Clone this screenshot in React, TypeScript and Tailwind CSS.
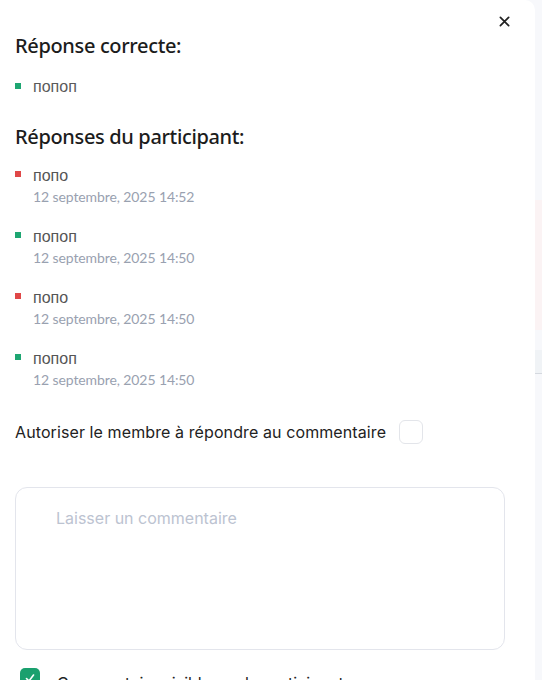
import React from "react";

const items = [
  { t: "попо", d: "12 septembre, 2025 14:52", ok: false },
  { t: "попоп", d: "12 septembre, 2025 14:50", ok: true },
  { t: "попо", d: "12 septembre, 2025 14:50", ok: false },
  { t: "попоп", d: "12 septembre, 2025 14:50", ok: true },
];

export default function App() {
  return (
    <div className="flex w-[542px] h-[680px] overflow-hidden bg-[#f7f8fb]">
      <div className="relative w-[535px] shrink-0 bg-white rounded-tr-[10px] px-[15px] pt-[33px]">
        <button className="absolute right-[24px] top-[14px] w-[14px] h-[14px] flex items-center justify-center text-[#222]">
          <svg width="11" height="11" viewBox="0 0 12 12" fill="none" stroke="currentColor" strokeWidth="1.9" strokeLinecap="round">
            <path d="M1.5 1.5L10.5 10.5M10.5 1.5L1.5 10.5" />
          </svg>
        </button>
        <h2 className="text-[20px] leading-[26px] font-medium text-[#1c1c1c] font-['Noto_Sans',sans-serif] tracking-[-0.35px]">Réponse correcte:</h2>
        <div className="mt-[19px] flex items-center h-[18px]">
          <span className="w-[6px] h-[6px] bg-[#1ea672] mr-[12px] -mt-[3px]" />
          <span className="text-[16px] text-[#5a5a5a] font-['Liberation_Sans',sans-serif]">попоп</span>
        </div>
        <h2 className="mt-[28px] text-[20px] leading-[26px] font-medium text-[#1c1c1c] font-['Noto_Sans',sans-serif] tracking-[-0.35px]">Réponses du participant:</h2>
        <div className="mt-[16px] flex flex-col gap-[20px]">
          {items.map((it, i) => (
            <div key={i} className="flex">
              <span className={`w-[6px] h-[6px] mr-[12px] mt-[5px] ${it.ok ? "bg-[#1ea672]" : "bg-[#e04848]"}`} />
              <div className="flex flex-col">
                <span className="text-[16px] leading-[19px] text-[#555] font-['Liberation_Sans',sans-serif]">{it.t}</span>
                <span className="mt-[2px] text-[14px] leading-[20px] text-[#99a1b0] font-['Lato',sans-serif] tracking-[-0.1px]">{it.d}</span>
              </div>
            </div>
          ))}
        </div>
        <div className="mt-[30px] flex items-center font-['Inter',sans-serif]">
          <span className="text-[16px] text-[#222] tracking-[0.1px]">Autoriser le membre à répondre au commentaire</span>
          <span className="ml-[13px] w-[24px] h-[24px] rounded-[6px] border border-[#e3e5ea] bg-white" />
        </div>
        <div className="mt-[43px] w-[490px] h-[163px] rounded-[12px] border border-[#e3e5ec] px-[40px] pt-[18px] font-['Inter',sans-serif]">
          <span className="text-[16px] text-[#bcc3d1]">Laisser un commentaire</span>
        </div>
        <div className="mt-[18px] ml-[5px] flex items-start font-['Inter',sans-serif]">
          <span className="w-[20px] h-[20px] shrink-0 rounded-[5px] bg-[#1aa06e] flex items-center justify-center">
            <svg width="12" height="12" viewBox="0 0 12 12" fill="none" stroke="white" strokeWidth="1.6" strokeLinecap="round" strokeLinejoin="round">
              <path d="M2.5 6.5L5 9L9.5 3" />
            </svg>
          </span>
          <span className="ml-[17px] mt-[5px] text-[16px] leading-[20px] text-[#222]">Commentaire visible par le participant</span>
        </div>
      </div>
      <div className="flex-1 flex flex-col">
        <div className="h-[200px]" />
        <div className="h-[130px] bg-[#fbf3f4]" />
        <div className="h-[20px]" />
        <div className="h-[24px] bg-[#f0f3f6] border-b border-[#d5d9df]" />
      </div>
    </div>
  );
}
